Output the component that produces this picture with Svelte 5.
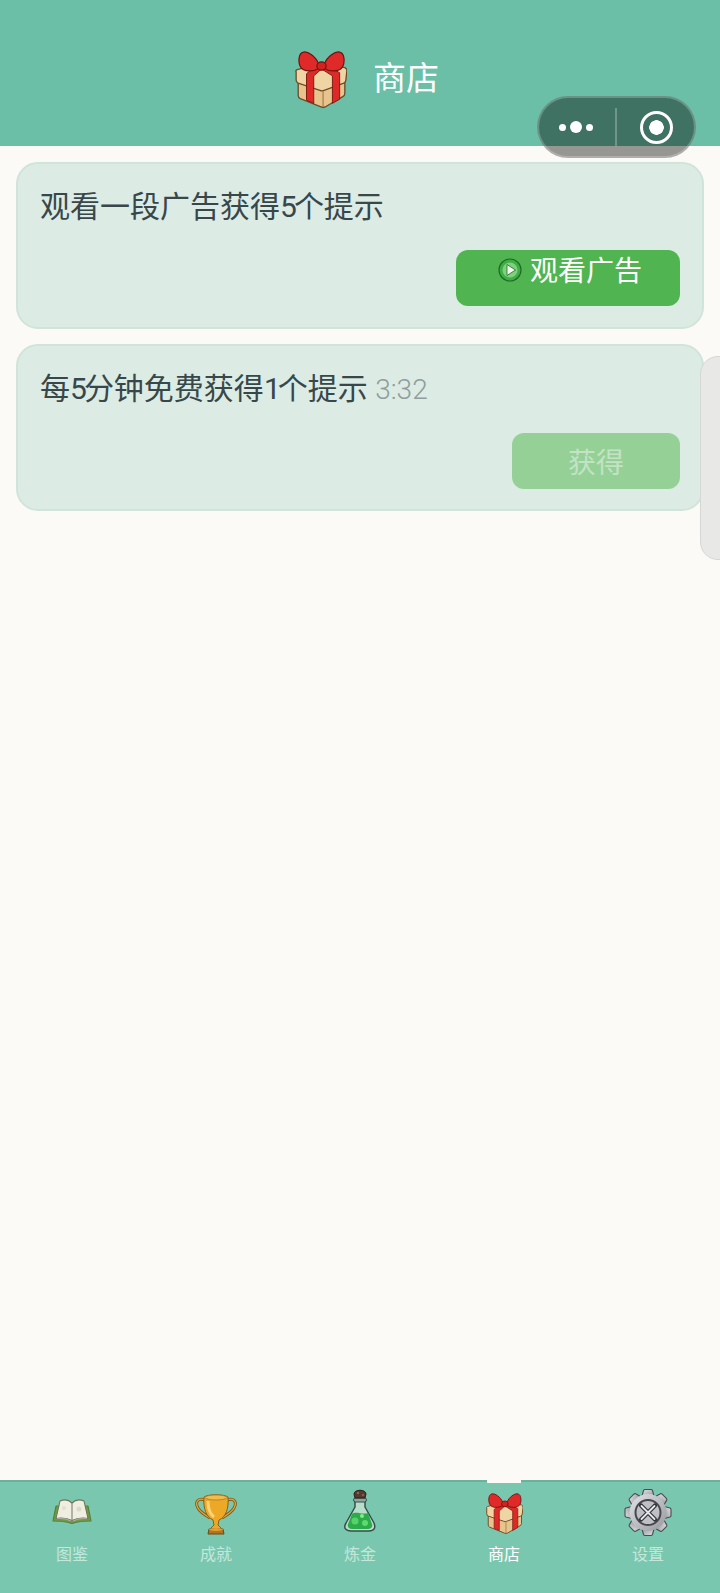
<script>
    const tabs = [
        { label: "图鉴", icon: "book" },
        { label: "成就", icon: "trophy" },
        { label: "炼金", icon: "flask" },
        { label: "商店", icon: "gift", active: true },
        { label: "设置", icon: "gear" }
    ];
    const teeth = [0, 45, 90, 135, 180, 225, 270, 315];
</script>

{#snippet gift(cls)}
    <svg class={cls} viewBox="0 0 50 55">
        <!-- box -->
        <path d="M3 26 L3 43 Q3 45 5 46 L25 54 Q27 55 29 54 L46 44 Q48 43 48 41 L48 26 Z" fill="#e8c48d" stroke="#6e4c2a" stroke-width="1.300" stroke-linejoin="round"/>
        <!-- lid -->
        <path d="M1 20 Q0 19 2 18 L25 12 L48 16 Q50 17 50 19 L49 28 Q49 30 47 31 L28 38 Q26 39 24 38 L3 31 Q1 30 1 28 Z" fill="#f0d5a4" stroke="#6e4c2a" stroke-width="1.300" stroke-linejoin="round"/>
        <path d="M27 39 L27 54" stroke="#a87f4c" stroke-width="1.200"/>
        <!-- ribbon -->
        <path d="M11 22 L11 47.500 L18 50.500 L18 24 L26 17 L20 14 Z" fill="#dc2a26" stroke="#7c1612" stroke-width="0.900" stroke-linejoin="round"/>
        <path d="M36 24 L36 50.500 L43 46.500 L43 21 L31 14 L25 17 Z" fill="#dc2a26" stroke="#7c1612" stroke-width="0.900" stroke-linejoin="round"/>
        <!-- bow -->
        <path d="M23 13 C20 5 12 0 8 1 C3 2 3 11 5 15 C8 21 19 20 23 16 Z" fill="#e02a2a" stroke="#701310" stroke-width="1.200"/>
        <path d="M28 13 C31 5 39 0 43 1 C48 2 48 11 46 15 C43 21 32 20 28 16 Z" fill="#e02a2a" stroke="#701310" stroke-width="1.200"/>
        <ellipse cx="25.500" cy="14.500" rx="4.500" ry="4" fill="#d3211f" stroke="#701310" stroke-width="1.100"/>
    </svg>
{/snippet}

{#snippet book()}
    <svg class="tab-icon" viewBox="0 0 50 50">
        <path d="M6 33 L9 18 L41 18 L44 33 Q35 33 28 34.500 Q25 36.500 22 34.500 Q15 33 6 33 Z" fill="#6f9a45" stroke="#56803a" stroke-width="1.200" stroke-linejoin="round"/>
        <path d="M9 30.500 L13 13 Q20 10 25 15 Q30 10 37 13 L41 30.500 Q32 29 25 32.500 Q18 29 9 30.500 Z" fill="#f0eee0" stroke="#70755f" stroke-width="1.100" stroke-linejoin="round"/>
        <path d="M25 15 L25 32.500" stroke="#7f8172" stroke-width="1.100"/>
        <path d="M10 30.500 Q18 29.500 24 33 M40 30.500 Q32 29.500 26 33" fill="none" stroke="#a9a896" stroke-width="1.200"/>
        <circle cx="32" cy="21" r="2.500" fill="#dcdcc6"/><circle cx="17" cy="20" r="2" fill="#e2e0cc"/>
    </svg>
{/snippet}

{#snippet trophy()}
    <svg class="tab-icon" viewBox="0 0 50 50">
        <path d="M14 12 C6 9 4 15 7 20 C9 24 14 27 19 30 M36 12 C44 9 46 15 43 20 C41 24 36 27 31 30" fill="none" stroke="#80591a" stroke-width="3"/>
        <path d="M14 12 C6 9 4 15 7 20 C9 24 14 27 19 30 M36 12 C44 9 46 15 43 20 C41 24 36 27 31 30" fill="none" stroke="#dda73a" stroke-width="1.300"/>
        <path d="M13 9 C17 6 33 6 37 9 C38 20 35 29 28 32 L27 37 L31 41 L19 41 L23 37 L22 32 C15 29 12 20 13 9 Z" fill="#eda826" stroke="#86601c" stroke-width="1"/>
        <ellipse cx="25" cy="9.500" rx="11" ry="2.500" fill="#f2bb4d" stroke="#a87a24" stroke-width="0.800"/>
        <path d="M17 13 C17 20 19 26 23 29" stroke="#f9d377" stroke-width="3" fill="none"/>
        <path d="M18 41 L32 41 L33 46 L17 46 Z" fill="#b27420" stroke="#6d4a12" stroke-width="1" stroke-linejoin="round"/>
        <ellipse cx="25" cy="41.500" rx="7" ry="1.500" fill="#e0a132"/>
    </svg>
{/snippet}

{#snippet flask()}
    <svg class="tab-icon" viewBox="0 0 50 50">
        <path d="M20 13 L20 19 L11 35 C8 40 11 43 16 43 L34 43 C39 43 41 40 39 35 L30 19 L30 13 Z" fill="#b9dccb" stroke="#35504a" stroke-width="1.500" stroke-linejoin="round"/>
        <path d="M17 26 C21 23 27 27 33 25 L37 36 C38 39 36 41 33 41 L17 41 C14 41 12 39 13 36 Z" fill="#2cab4b"/>
        <circle cx="20" cy="33" r="3.500" fill="#56d268"/><circle cx="30" cy="35" r="3" fill="#5ed96f"/><circle cx="27" cy="28" r="2" fill="#84e98c"/>
        <rect x="18.500" y="10" width="13" height="4" rx="2" fill="#8fa89e" stroke="#35504a"/>
        <path d="M20 10 L19 6 C19 1 31 1 31 6 L30 10 Z" fill="#56392f" stroke="#2e1f1a"/>
        <circle cx="23" cy="5" r="1.200" fill="#8a6a5c"/><circle cx="28" cy="7" r="1" fill="#8a6a5c"/>
    </svg>
{/snippet}

{#snippet gear()}
    <svg class="tab-icon" viewBox="0 0 50 50">
        <defs>
            <linearGradient id="gearFill" x1="0" y1="0" x2="1" y2="1">
                <stop offset="0" stop-color="#e2e3e8"/>
                <stop offset="1" stop-color="#96989e"/>
            </linearGradient>
        </defs>
        <g fill="url(#gearFill)" stroke="#4a4c52" stroke-width="1.100" stroke-linejoin="round">
            {#each teeth as t}
                <path d="M19 8 L20.500 2.500 Q21 1.500 22 1.500 L28 1.500 Q29 1.500 29.500 2.500 L31 8 Z" transform="rotate({t} 25 24.500)"/>
            {/each}
        </g>
        <circle cx="25" cy="24.500" r="18.500" fill="url(#gearFill)"/>
        <circle cx="25" cy="24.500" r="12.500" fill="#bfc0c5" stroke="#46484e" stroke-width="2"/>
        <path d="M18 17.500 L32 31.500 M32 17.500 L18 31.500" stroke="#33343a" stroke-width="4.200" stroke-linecap="round"/>
        <path d="M18.500 18 L31.500 31 M31.500 18 L18.500 31" stroke="#e6e7ea" stroke-width="1.800" stroke-linecap="round"/>
    </svg>
{/snippet}

<div class="page">
    <header class="header">
        {@render gift("title-icon")}
        <span class="title">商店</span>
    </header>

    <div class="capsule">
        <div class="cap-side">
            <i class="dot"></i><i class="dot big"></i><i class="dot"></i>
        </div>
        <div class="cap-line"></div>
        <div class="cap-side">
            <i class="target"></i>
        </div>
    </div>

    <main class="content">
        <section class="card">
            <p class="card-text">观看一段广告获得<span class="num">5</span>个提示</p>
            <div class="card-foot">
                <button class="btn ad">
                    <svg class="play" viewBox="0 0 24 24">
                        <circle cx="12" cy="12" r="11" fill="#3fae45" stroke="#1f6b26" stroke-width="1.200"/>
                        <circle cx="12" cy="12" r="7.500" fill="#7fd07f"/>
                        <path d="M9 6.500 L17.500 12 L9 17.500 Z" fill="#f6f9f0" stroke="#1f6b26" stroke-width="0.800" stroke-linejoin="round"/>
                    </svg>
                    观看广告
                </button>
            </div>
        </section>
        <section class="card">
            <p class="card-text">每<span class="num">5</span>分钟免费获得<span class="num">1</span>个提示 <span class="timer">3:32</span></p>
            <div class="card-foot">
                <button class="btn off">获得</button>
            </div>
        </section>
    </main>

    <div class="side-tab"></div>

    <nav class="tabbar">
        {#each tabs as tab}
            <div class="tab" class:active={tab.active}>
                <div class="tab-slot">
                    {#if tab.icon === "book"}{@render book()}
                    {:else if tab.icon === "trophy"}{@render trophy()}
                    {:else if tab.icon === "flask"}{@render flask()}
                    {:else if tab.icon === "gift"}{@render gift("tab-gift")}
                    {:else}{@render gear()}{/if}
                </div>
                <span>{tab.label}</span>
            </div>
        {/each}
    </nav>
</div>

<style>
    :global(body) {
        margin: 0;
    }

    .page {
        position: relative;
        display: flex;
        flex-direction: column;
        height: 1593px;
        overflow: hidden;
        background: #fbfaf6;
        font-family: Roboto, "Noto Sans CJK SC", sans-serif;
    }

    .header {
        display: flex;
        align-items: center;
        justify-content: center;
        gap: 26px;
        height: 146px;
        padding: 10px 0 0 14px;
        box-sizing: border-box;
        background: #6bbfa7;
    }

    .title-icon {
        width: 52px;
        height: 57px;
        margin-top: 2px;
    }

    .title {
        font-size: 33px;
        line-height: 1;
        color: #fff;
    }

    .capsule {
        position: absolute;
        top: 96px;
        left: 537px;
        width: 159px;
        height: 62px;
        display: flex;
        align-items: center;
        box-sizing: border-box;
        border: 2px solid rgba(255, 255, 255, 0.22);
        border-radius: 31px;
        background: rgba(0, 0, 0, 0.4);
    }

    .cap-side {
        flex: 1;
        display: flex;
        align-items: center;
        justify-content: center;
        gap: 4px;
    }

    .cap-side:last-child {
        padding-left: 3px;
    }

    .cap-side:first-child {
        padding-right: 1px;
    }

    .cap-line {
        width: 2px;
        height: 38px;
        background: rgba(255, 255, 255, 0.25);
    }

    .dot {
        width: 7px;
        height: 7px;
        border-radius: 50%;
        background: #fff;
    }

    .dot.big {
        width: 12px;
        height: 12px;
    }

    .target {
        width: 33px;
        height: 33px;
        box-sizing: border-box;
        border: 3px solid #fff;
        border-radius: 50%;
        background: radial-gradient(circle, #fff 0 7px, transparent 7.500px);
    }

    .content {
        flex: 1;
        display: flex;
        flex-direction: column;
        gap: 15px;
        padding: 16px 16px 0;
    }

    .card {
        box-sizing: border-box;
        width: 688px;
        height: 167px;
        padding: 21px 22px 0;
        border: 2px solid #d0e4db;
        border-radius: 22px;
        background: #dcebe4;
    }

    .card-text {
        margin: 0;
        font-size: 30px;
        line-height: 44px;
        color: #37474a;
    }

    .num {
        letter-spacing: -3px;
    }

    .timer {
        font-size: 28px;
        font-weight: 300;
        color: #8f9d9c;
    }

    .card-foot {
        display: flex;
        justify-content: flex-end;
        margin-top: 21px;
    }

    .btn {
        display: flex;
        justify-content: center;
        height: 56px;
        padding: 0;
        border: none;
        border-radius: 12px;
        font: inherit;
        font-size: 28px;
        line-height: 44px;
        color: #fff;
    }

    .btn.ad {
        gap: 8px;
        width: 224px;
        padding-left: 4px;
        box-sizing: border-box;
        background: #50b550;
    }

    .btn.off {
        align-items: center;
        width: 168px;
        padding-top: 5px;
        box-sizing: border-box;
        background: #95d197;
        color: #c3e3c5;
    }

    .play {
        width: 24px;
        height: 24px;
        margin-top: 8px;
    }

    .side-tab {
        position: absolute;
        top: 356px;
        left: 700px;
        width: 40px;
        height: 204px;
        box-sizing: border-box;
        border: 1px solid #d6d6d4;
        border-radius: 18px;
        background: #e8e8e7;
    }

    .tabbar {
        display: flex;
        height: 113px;
        box-sizing: border-box;
        border-top: 2px solid #6bb19c;
        background: #7ac7b0;
    }

    .tab {
        position: relative;
        flex: 1;
        display: flex;
        flex-direction: column;
        align-items: center;
        padding-top: 6px;
        font-size: 16px;
        line-height: 22px;
        color: #c4e7db;
    }

    .tab.active {
        color: #fff;
    }

    .tab.active::before {
        content: "";
        position: absolute;
        top: -3px;
        left: 55px;
        width: 34px;
        height: 4px;
        background: #fbfaf6;
    }

    .tab-slot {
        display: flex;
        align-items: center;
        justify-content: center;
        width: 50px;
        height: 50px;
        margin-bottom: 6px;
    }

    .tab-icon {
        width: 50px;
        height: 50px;
    }

    :global(.tab-gift) {
        width: 37px;
        height: 41px;
    }
</style>
